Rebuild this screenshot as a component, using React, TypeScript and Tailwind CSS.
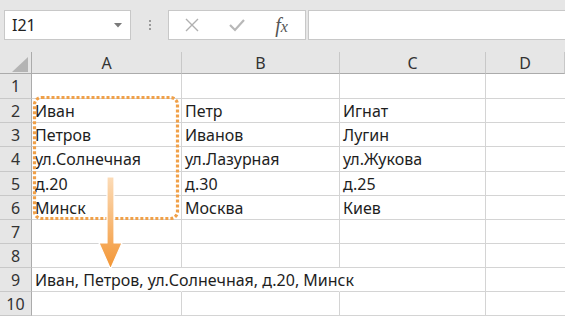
import React from "react";

const rows: { n: number; h: string; a?: string; b?: string; c?: string }[] = [
  { n: 1, h: "h-[25px]" },
  { n: 2, h: "h-[24px]", a: "Иван", b: "Петр", c: "Игнат" },
  { n: 3, h: "h-[24px]", a: "Петров", b: "Иванов", c: "Лугин" },
  { n: 4, h: "h-[25px]", a: "ул.Солнечная", b: "ул.Лазурная", c: "ул.Жукова" },
  { n: 5, h: "h-[24px]", a: "д.20", b: "д.30", c: "д.25" },
  { n: 6, h: "h-[24px]", a: "Минск", b: "Москва", c: "Киев" },
  { n: 7, h: "h-[24px]" },
  { n: 8, h: "h-[24px]" },
  { n: 9, h: "h-[24px]", a: "Иван, Петров, ул.Солнечная, д.20, Минск" },
  { n: 10, h: "h-[24px]" },
];

export default function App() {
  return (
    <div
      className="relative w-[565px] h-[316px] overflow-hidden bg-white"
      style={{ fontFamily: '"Noto Sans", "Open Sans", sans-serif' }}
    >
      {/* toolbar */}
      <div className="h-[52px] bg-[#e6e6e6] flex items-start pt-[10px] pl-[4px]">
        <div className="w-[127px] h-[30px] bg-white border border-[#c8c8c8] flex items-center pl-[7px] pr-[8px]">
          <span className="text-[16px] text-[#222] leading-none flex-1">I21</span>
          <svg width="8" height="5" viewBox="0 0 8 5">
            <path d="M0 0 L8 0 L4 4.5 Z" fill="#7a7a7a" />
          </svg>
        </div>
        <div className="w-[37px] h-[30px] flex flex-col items-center justify-center gap-[2px]">
          <span className="w-[2px] h-[2px] bg-[#9a9a9a]" />
          <span className="w-[2px] h-[2px] bg-[#9a9a9a]" />
          <span className="w-[2px] h-[2px] bg-[#9a9a9a]" />
        </div>
        <div className="w-[138px] h-[30px] bg-white border border-[#c8c8c8] flex items-center">
          <div className="w-[45px] flex justify-center">
            <svg width="14" height="14" viewBox="0 0 14 14">
              <path d="M1 1 L13 13 M13 1 L1 13" stroke="#b0b0b0" strokeWidth="1.4" />
            </svg>
          </div>
          <div className="w-[45px] flex justify-center">
            <svg width="16" height="14" viewBox="0 0 16 14">
              <path d="M1 7 L6 12 L15 2" stroke="#b8b8b8" strokeWidth="2.2" fill="none" />
            </svg>
          </div>
          <div className="w-[45px] flex justify-center">
            <span
              className="text-[20px] italic text-[#555] leading-none"
              style={{ fontFamily: '"Liberation Serif", serif' }}
            >
              f<span className="text-[16px]">x</span>
            </span>
          </div>
        </div>
        <div className="ml-[2px] flex-1 h-[30px] bg-white border border-[#c8c8c8] border-r-0" />
      </div>

      {/* grid */}
      <div className="grid grid-cols-[32px_150px_158px_146px_1fr] text-[16px] text-[#1e1e1e]">
        {/* header row */}
        <div className="h-[22px] bg-[#e6e6e6] border-r border-b border-[#ababab] relative">
          <svg className="absolute left-[12px] top-[5px]" width="16" height="15" viewBox="0 0 16 15">
            <path d="M16 0 L16 15 L0 15 Z" fill="#b4b4b4" />
          </svg>
        </div>
        {["A", "B", "C", "D"].map((c) => (
          <div
            key={c}
            className="h-[22px] bg-[#e6e6e6] border-r border-b border-r-[#c8c8c8] border-b-[#ababab] flex items-center justify-center text-[#333] text-[16px]"
          >
            {c}
          </div>
        ))}
        {rows.map((r) => (
          <React.Fragment key={r.n}>
            <div
              className={`${r.h} bg-[#e6e6e6] border-r border-b border-r-[#ababab] border-b-[#c8c8c8] flex items-center justify-center text-[#333]`}
            >
              {r.n}
            </div>
            <div className={`${r.h} border-r border-b border-[#d4d4d4] flex items-center pl-[3px] whitespace-nowrap relative z-10 ${r.n === 9 ? "border-r-transparent" : ""}`}>
              {r.a}
            </div>
            <div className={`${r.h} border-r border-b border-[#d4d4d4] flex items-center pl-[3px] whitespace-nowrap ${r.n === 9 ? "border-r-transparent" : ""}`}>
              {r.b}
            </div>
            <div className={`${r.h} border-r border-b border-[#d4d4d4] flex items-center pl-[3px] whitespace-nowrap`}>
              {r.c}
            </div>
            <div className={`${r.h} border-b border-[#d4d4d4]`} />
          </React.Fragment>
        ))}
      </div>

      {/* overlay: dotted selection + arrow */}
      <svg className="absolute left-0 top-0 pointer-events-none z-20" width="565" height="316">
        <defs>
          <linearGradient id="ag" x1="0" y1="0" x2="0" y2="1">
            <stop offset="0" stopColor="#fcdcb8" />
            <stop offset="1" stopColor="#f39533" />
          </linearGradient>
        </defs>
        <rect
          x="34.5"
          y="97.5"
          width="143"
          height="121"
          rx="7"
          fill="none"
          stroke="#f0a048"
          strokeWidth="3.2"
          strokeDasharray="3 2"
        />
        <path
          d="M107 177 L114 177 L114 243 L122 243 L110.5 269 L99 243 L107 243 Z"
          fill="url(#ag)"
          stroke="#ffffff"
          strokeWidth="1.2"
          strokeLinejoin="round"
        />
      </svg>
    </div>
  );
}
